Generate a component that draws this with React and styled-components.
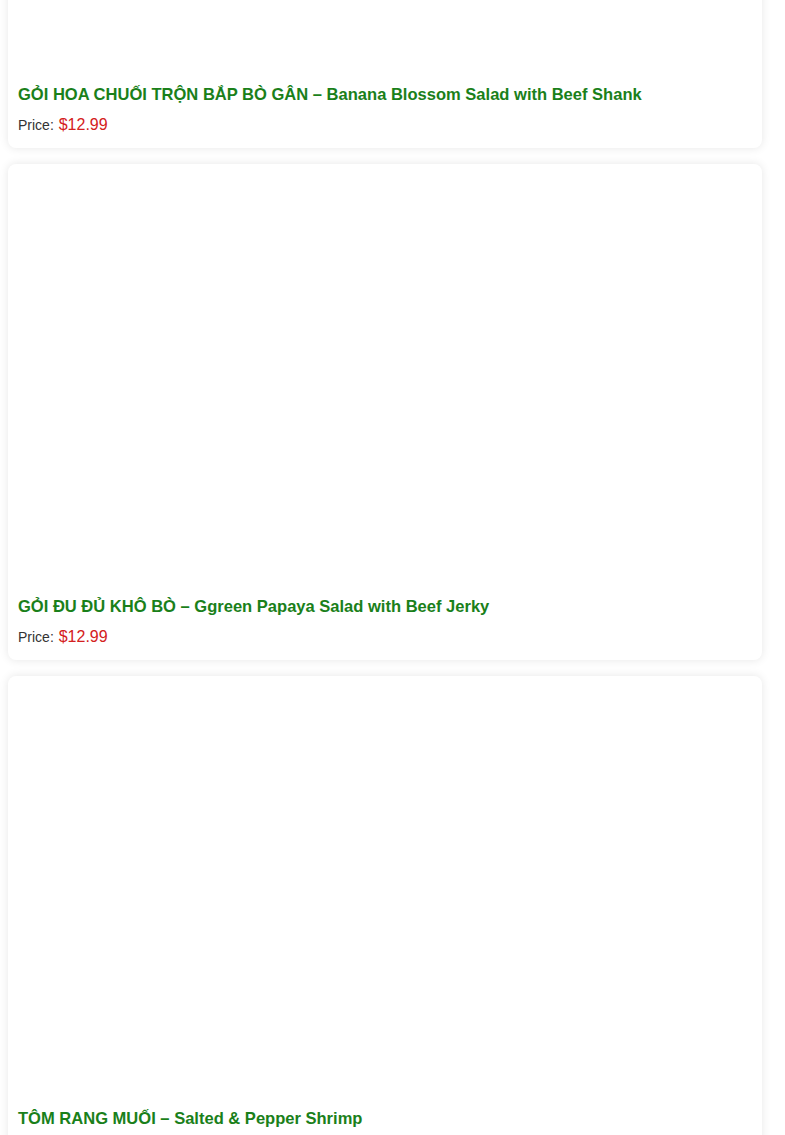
import styled, { createGlobalStyle } from 'styled-components';

const GlobalStyle = createGlobalStyle`
  body {
    margin: 0;
    background: #fff;
    font-family: "Liberation Sans", Arial, sans-serif;
  }
`;

// the window onto the list; the list is scrolled so the first card is cut
const Viewport = styled.div`
  height: 100vh;
  overflow: hidden;
  padding: 0 8px;
`;

const MenuList = styled.div`
  display: flex;
  flex-direction: column;
  gap: 16px;
  width: 754px;
  margin-top: -348px;
`;

const Card = styled.div`
  background: #fff;
  border-radius: 8px;
  box-shadow: 0 0 10px rgba(0, 0, 0, 0.1);
  padding: 10px;
`;

const Photo = styled.div`
  height: 413px;
  margin-bottom: 10px;
`;

const Title = styled.h3`
  margin: 0 0 11px;
  font-size: 16.55px;
  line-height: 20px;
  font-weight: bold;
  color: #1a801a;
`;

const Price = styled.p`
  margin: 0 0 4px;
  font-size: 14px;
  line-height: 18px;
  color: #333;
`;

const Amount = styled.span`
  font-size: 16px;
  margin-left: 1px;
  color: #d42020;
`;

const items = [
  'GỎI HOA CHUỐI TRỘN BẮP BÒ GÂN – Banana Blossom Salad with Beef Shank',
  'GỎI ĐU ĐỦ KHÔ BÒ – Ggreen Papaya Salad with Beef Jerky',
  'TÔM RANG MUỐI – Salted & Pepper Shrimp',
];

export default function App() {
  return (
    <>
      <GlobalStyle />
      <Viewport>
        <MenuList>
          {items.map((name) => (
            <Card key={name}>
              <Photo />
              <Title>{name}</Title>
              <Price>
                Price: <Amount>$12.99</Amount>
              </Price>
            </Card>
          ))}
        </MenuList>
      </Viewport>
    </>
  );
}
